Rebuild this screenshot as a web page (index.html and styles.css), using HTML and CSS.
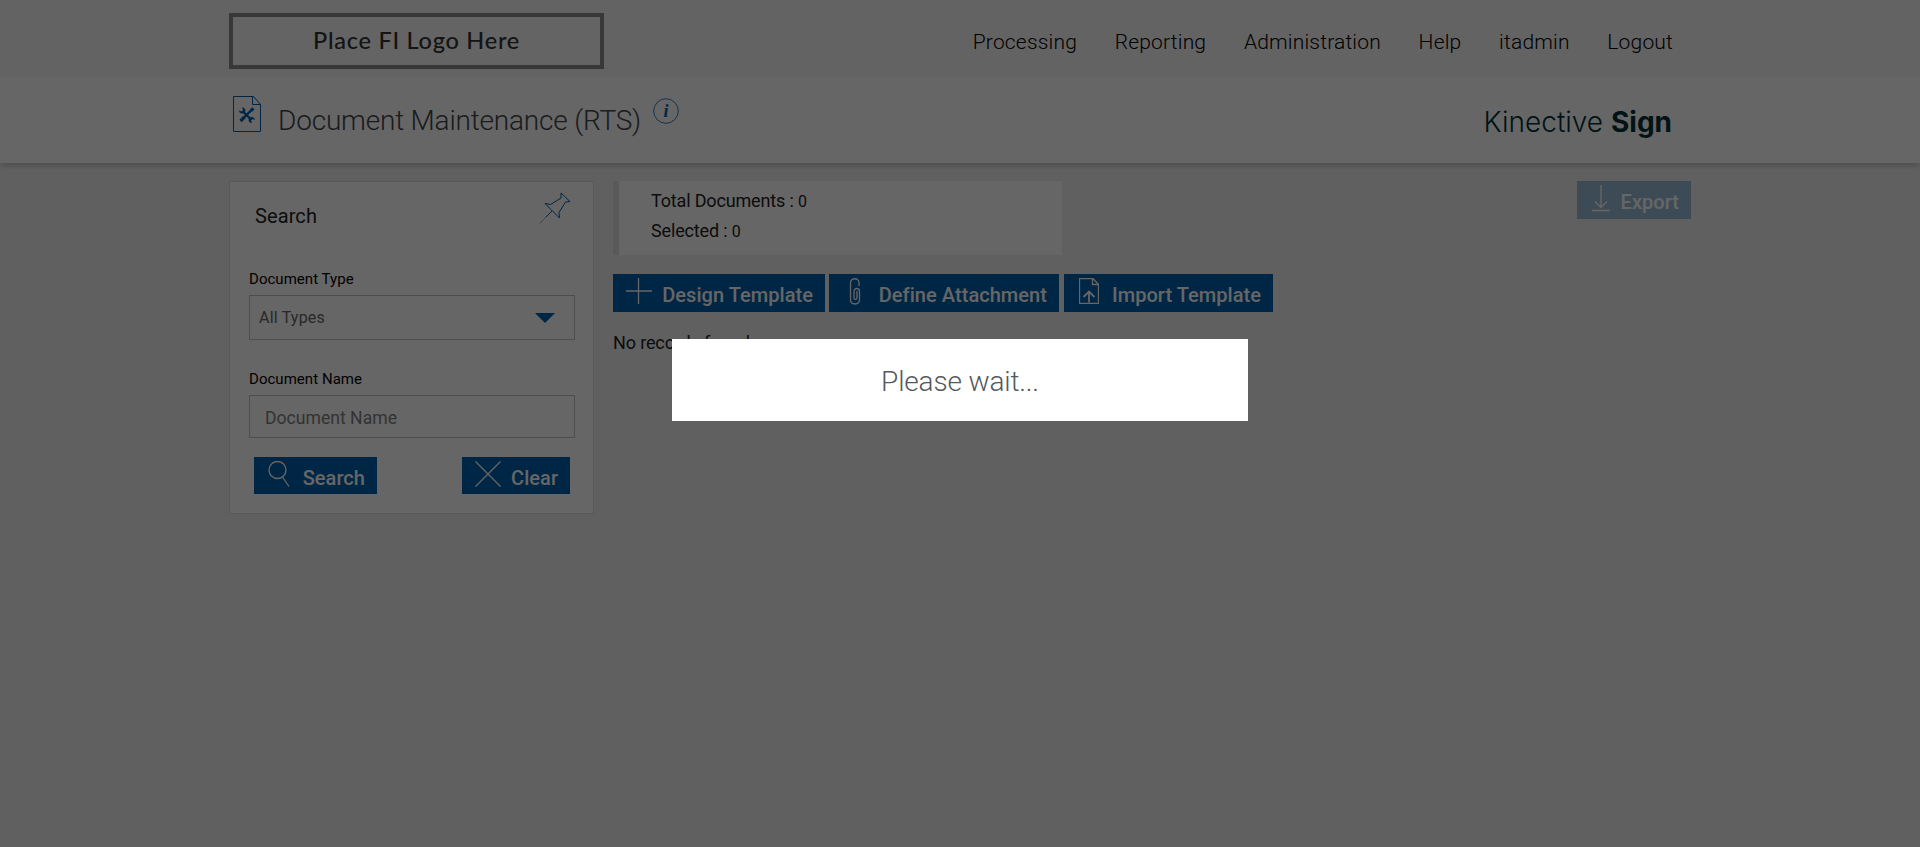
FILE: index.html
```
<!DOCTYPE html>
<html lang="en">
<head>
    <meta charset="UTF-8">
    <meta name="viewport" content="width=device-width, initial-scale=1.0">
    <title>Document Maintenance (RTS)</title>
    <link rel="stylesheet" href="styles.css">
</head>
<body>
    <header class="top-bar">
        <div class="container">
            <div class="fi-logo"><span>Place FI Logo Here</span></div>
            <nav>
                <ul>
                    <li><a href="#">Processing</a></li>
                    <li><a href="#">Reporting</a></li>
                    <li><a href="#">Administration</a></li>
                    <li><a href="#">Help</a></li>
                    <li><a href="#">itadmin</a></li>
                    <li><a href="#">Logout</a></li>
                </ul>
            </nav>
        </div>
    </header>

    <div class="title-bar">
        <div class="container">
            <svg class="title-icon" width="30" height="38" viewBox="0 0 30 38" fill="none" stroke="#005fad">
                <path d="M1.5 1.5H21.5L28.5 9.5V36.5H1.5ZM20.5 1.5V9.5H28.5"/>
                <path d="M10.500 16L19.500 25M19.500 15L10.500 24" stroke-width="2.400"/>
                <path d="M10 12.500C13 12.500 14 15 13 17L11 18.500C9 19 7 17.500 7 15.500L9.500 16.500L11 15ZM20 28C17 28 16 25.500 17 23.500L19 22C21 21.500 23 23 23 25L20.500 24L19 25.500Z" fill="#005fad" stroke="none"/>
                <path d="M19 15.500L21.500 13.500M12.500 22L8.500 26" stroke-width="3.200"/>
            </svg>
            <h1>Document Maintenance (RTS)</h1>
            <svg class="info-icon" width="26" height="26" viewBox="0 0 26 26">
                <circle cx="13" cy="13" r="12.3" fill="none" stroke="#005fad" stroke-width="0.8"/>
                <text x="13" y="18.500" text-anchor="middle">i</text>
            </svg>
            <div class="brand">Kinective <b>Sign</b></div>
        </div>
    </div>

    <main class="container">
        <aside class="search-panel">
            <div class="panel-head">
                <h2>Search</h2>
                <svg width="32" height="32" viewBox="0 0 32 32" fill="none" stroke="#005fad">
                    <path d="M22 1L31 9.500L26.500 10L20 20.500L20.500 26L6 11.500L11.500 12.500L22 6Z"/>
                    <path d="M13 19L7 25"/>
                    <path d="M7 25L0.500 31.500" stroke-opacity="0.45"/>
                </svg>
            </div>
            <label>Document Type</label>
            <div class="select">
                <span>All Types</span>
                <svg width="20" height="10" viewBox="0 0 20 10"><path d="M0 0H20L10 10Z" fill="#005fad"/></svg>
            </div>
            <label for="docName">Document Name</label>
            <input type="text" id="docName" placeholder="Document Name">
            <div class="panel-buttons">
                <button class="btn btn-search">
                    <svg width="26" height="26" viewBox="0 0 26 26"><circle cx="10.500" cy="9" r="8.500"/><path d="M15.500 16L22 25.500"/></svg>
                    Search
                </button>
                <button class="btn btn-clear">
                    <svg width="26" height="26" viewBox="0 0 26 26"><path d="M0.500 0.500L25.500 25.500M25.500 0.500L0.500 25.500"/></svg>
                    Clear
                </button>
            </div>
        </aside>

        <section class="results">
            <div class="results-head">
                <div class="totals">
                    <p>Total Documents : <span>0</span></p>
                    <p>Selected : <span>0</span></p>
                </div>
                <button class="btn btn-export" disabled>
                    <svg width="18" height="27" viewBox="0 0 18 27"><path d="M9 0V22M3 16.500L9 22.500L15 16.500M0 25.500H18"/></svg>
                    Export
                </button>
            </div>
            <div class="toolbar">
                <button class="btn btn-design">
                    <svg width="26" height="26" viewBox="0 0 26 26"><path d="M12.500 0V26M0 13H26"/></svg>
                    Design Template
                </button>
                <button class="btn btn-attach">
                    <svg width="12" height="27" viewBox="0 0 12 27"><path d="M10 8V4.500C10 -0.500 1.500 -0.500 1.500 4.500V21.500C1.500 27.500 10.500 27.500 10.500 21.500V13.500C10.500 9.500 5 9.500 5 13.500V19.500C5 22 8 22 8 19.500V13"/></svg>
                    Define Attachment
                </button>
                <button class="btn btn-import">
                    <svg width="20" height="26" viewBox="0 0 20 26"><path d="M0.500 0.500H14L19.500 6.500V25.500H0.500ZM13.500 0.500V6.500H19.500"/><path d="M10 24.500V14M4.500 19L10 13.500L15.500 19" stroke-width="1.800"/></svg>
                    Import Template
                </button>
            </div>
            <p class="no-records">No records found.</p>
        </section>
    </main>

    <!-- loading overlay -->
    <div class="overlay">
        <div class="wait-box">Please wait...</div>
    </div>
</body>
</html>
```
FILE: styles.css
```
* {
    box-sizing: border-box;
}

body {
    font-family: Roboto, Arial, sans-serif;
    margin: 0;
    background-color: #f0f0f0;
    color: #222;
}

h1, h2, p {
    margin: 0;
}

.container {
    width: 1462px;
    margin: 0 auto;
    display: flex;
}

.top-bar {
    height: 78px;
    background-color: #f7f7f7;
}

.fi-logo {
    width: 375px;
    height: 56px;
    margin-top: 13px;
    border: 4px solid #8c8c8c;
    background-color: #f9f9f9;
    font-family: Lato, sans-serif;
    font-size: 23.5px;
    font-weight: 500;
    letter-spacing: 0.75px;
    line-height: 46px;
    text-align: center;
    color: #333;
}

nav {
    margin-left: auto;
    padding-right: 18px;
}

nav ul {
    list-style-type: none;
    display: flex;
    gap: 37.7px;
    margin: 0;
    padding: 0;
}

nav a {
    color: #000;
    font-size: 21px;
    font-weight: 300;
    letter-spacing: 0.18px;
    line-height: 84px;
    text-decoration: none;
}

.title-bar {
    height: 85px;
    background-color: #fff;
    box-shadow: 0 4px 5px -1px rgba(0, 0, 0, 0.18);
}

.title-icon {
    margin: 17px 0 0 3px;
}

.title-bar h1 {
    width: 364px;
    margin-left: 16px;
    font-size: 28px;
    font-weight: 300;
    letter-spacing: -0.2px;
    line-height: 85px;
    white-space: nowrap;
    color: #41464c;
}

.info-icon {
    margin: 20px 0 0 11px;
}

.info-icon text {
    font: italic bold 18px "Liberation Serif", serif;
    fill: #005fad;
}

.brand {
    margin-left: auto;
    padding-right: 19px;
    font-family: Inter, sans-serif;
    font-size: 28px;
    font-weight: 300;
    line-height: 88px;
    color: #003338;
}

.brand b {
    font-weight: 700;
}

main {
    padding-top: 18px;
}

.search-panel {
    width: 365px;
    height: 333px;
    padding: 0 19px;
    background-color: #fff;
    border: 1px solid #ddd;
    display: flex;
    flex-direction: column;
}

.panel-head {
    display: flex;
    justify-content: space-between;
    padding: 10px 3px 0 6px;
    height: 84px;
}

.panel-head h2 {
    font-size: 20px;
    font-weight: 400;
    letter-spacing: 0.1px;
    line-height: 48px;
}

.search-panel label {
    font-size: 15px;
    letter-spacing: 0.04px;
    line-height: 27px;
    color: #000;
}

.select, .search-panel input {
    width: 326px;
    border: 1px solid #c4c4c4;
    background-color: #fff;
}

.select {
    height: 45px;
    margin: 2px 0 26px;
    padding: 0 19px 0 9px;
    display: flex;
    align-items: center;
    justify-content: space-between;
    font-size: 16px;
    letter-spacing: 0.2px;
    color: #666;
}

.search-panel input {
    height: 43px;
    flex-shrink: 0;
    margin-top: 2px;
    padding: 2px 15px 0;
    font: 17.6px Roboto, sans-serif;
}

.search-panel input::placeholder {
    color: #808080;
}

.panel-buttons {
    display: flex;
    justify-content: space-between;
    padding: 19px 4px 0 5px;
}

.btn {
    height: 38px;
    padding: 4px 12px 0 13px;
    border: 0;
    background-color: #005fad;
    color: #fff;
    display: flex;
    align-items: flex-start;
    justify-content: space-between;
    font: 500 20px/34px Roboto, sans-serif;
    letter-spacing: 0.05px;
    white-space: nowrap;
}

.btn svg {
    fill: none;
    stroke: #fff;
    stroke-width: 1.3;
}

.btn-search {
    width: 123px;
    height: 37px;
}

.btn-clear {
    width: 108px;
    height: 37px;
}

.results {
    flex: 1;
    padding-left: 19px;
}

.results-head {
    display: flex;
    justify-content: space-between;
}

.totals {
    width: 449px;
    height: 74px;
    padding: 5px 0 0 32px;
    background-color: #fff;
    border-left: 6px solid #e2e2e2;
    font-size: 18px;
    letter-spacing: -0.16px;
    line-height: 30px;
}

.totals p {
    height: 29.5px;
}

.totals span {
    font-size: 16px;
}

.btn-export {
    width: 114px;
    padding-left: 15px;
    background-color: #98bbd9;
}

.toolbar {
    display: flex;
    margin-top: 19px;
}

.btn-design {
    width: 212px;
    margin-right: 4px;
}

.btn-attach {
    width: 230px;
    padding-left: 20px;
    margin-right: 5px;
}

.btn-import {
    width: 209px;
    padding-left: 15px;
}

.no-records {
    margin-top: 17px;
    font-size: 18px;
    letter-spacing: -0.14px;
    line-height: 28px;
}

.overlay {
    position: fixed;
    inset: 0;
    background-color: rgba(0, 0, 0, 0.6);
}

.wait-box {
    width: 576px;
    height: 82px;
    margin: 339px auto 0;
    background-color: #fff;
    font-size: 28px;
    font-weight: 300;
    letter-spacing: -0.16px;
    line-height: 85px;
    text-align: center;
    color: #54585d;
}
```
